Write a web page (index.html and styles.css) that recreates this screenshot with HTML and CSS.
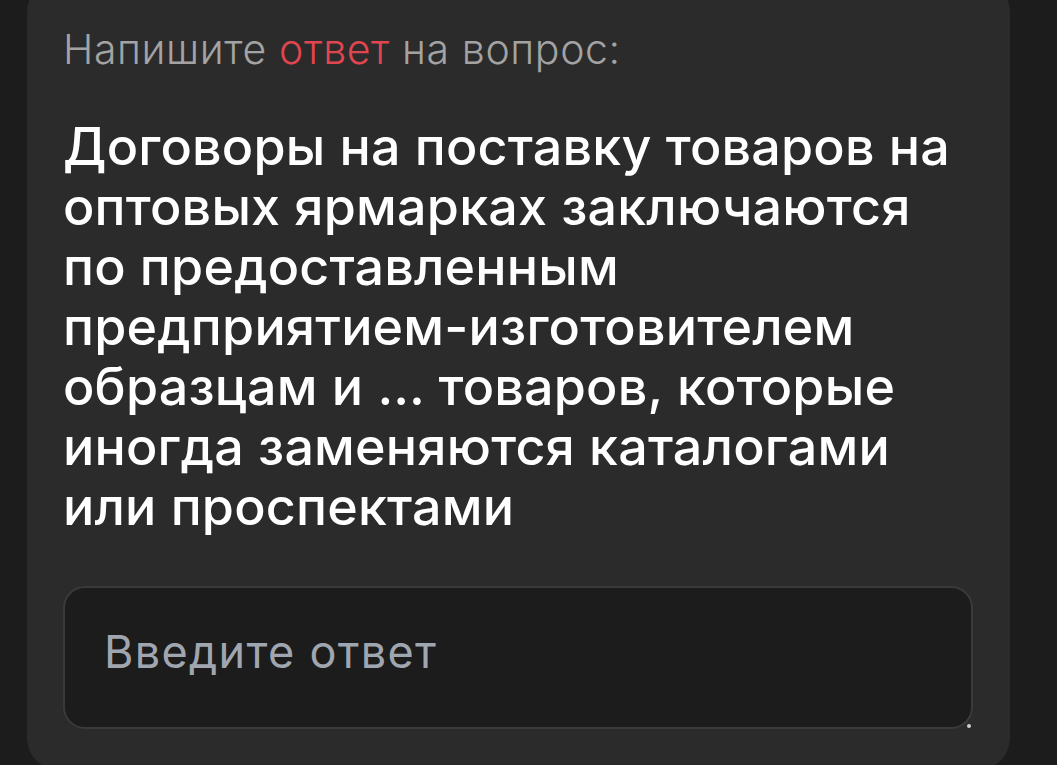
FILE: index.html
```html
<!DOCTYPE html>
<html lang="ru">
<head>
    <meta charset="UTF-8">
    <meta name="viewport" content="width=device-width, initial-scale=1.0">
    <title>Вопрос</title>
    <link rel="stylesheet" href="styles.css">
</head>
<body>

<div class="question-card">
    <p class="hint">Напишите <span class="accent">ответ</span> на вопрос:</p>
    <h2 class="question">Договоры на поставку товаров на оптовых ярмарках заключаются по предоставленным предприятием-изготовителем образцам и … товаров, которые иногда заменяются каталогами или проспектами</h2>
    <div class="answer">
        <textarea class="answer-input" placeholder="Введите ответ"></textarea>
    </div>
</div>

</body>
</html>
```

FILE: styles.css
```css
body {
    margin: 0;
    height: 765px;
    overflow: hidden;
    background-color: #1c1c1c;
    font-family: Inter, "Noto Sans", sans-serif;
}
.question-card {
    margin: -20px 0 0 27px;
    width: 983px;
    box-sizing: border-box;
    padding: 47px 37px 41px 36px;
    background-color: #2b2b2b;
    border-radius: 32px;
}
.hint {
    margin: 0;
    font-size: 41px;
    line-height: 44px;
    font-weight: 300;
    letter-spacing: 0.6px;
    color: #a3a3a3;
}
.hint .accent {
    color: #e0464f;
}
.question {
    margin: 46px 0 0 0;
    font-size: 52px;
    line-height: 60px;
    font-weight: 500;
    letter-spacing: 0.2px;
    color: #ffffff;
}
.answer {
    position: relative;
    margin-top: 49px;
}
/* little grip dot in the corner of the field */
.answer::after {
    content: "";
    position: absolute;
    right: 2px;
    bottom: 1px;
    width: 4px;
    height: 4px;
    border-radius: 50%;
    background-color: #cfcfcf;
}
.answer-input {
    display: block;
    width: 100%;
    height: 143px;
    box-sizing: border-box;
    margin: 0;
    padding: 37px 39px 0 39px;
    background-color: #1c1c1c;
    border: 2px solid #3a3a3a;
    border-radius: 22px;
    resize: none;
    outline: none;
    font-family: Inter, "Noto Sans", sans-serif;
    font-size: 45px;
    line-height: 53px;
    letter-spacing: 1.3px;
    color: #ffffff;
}
.answer-input::placeholder {
    color: #a0a6af;
}
```
